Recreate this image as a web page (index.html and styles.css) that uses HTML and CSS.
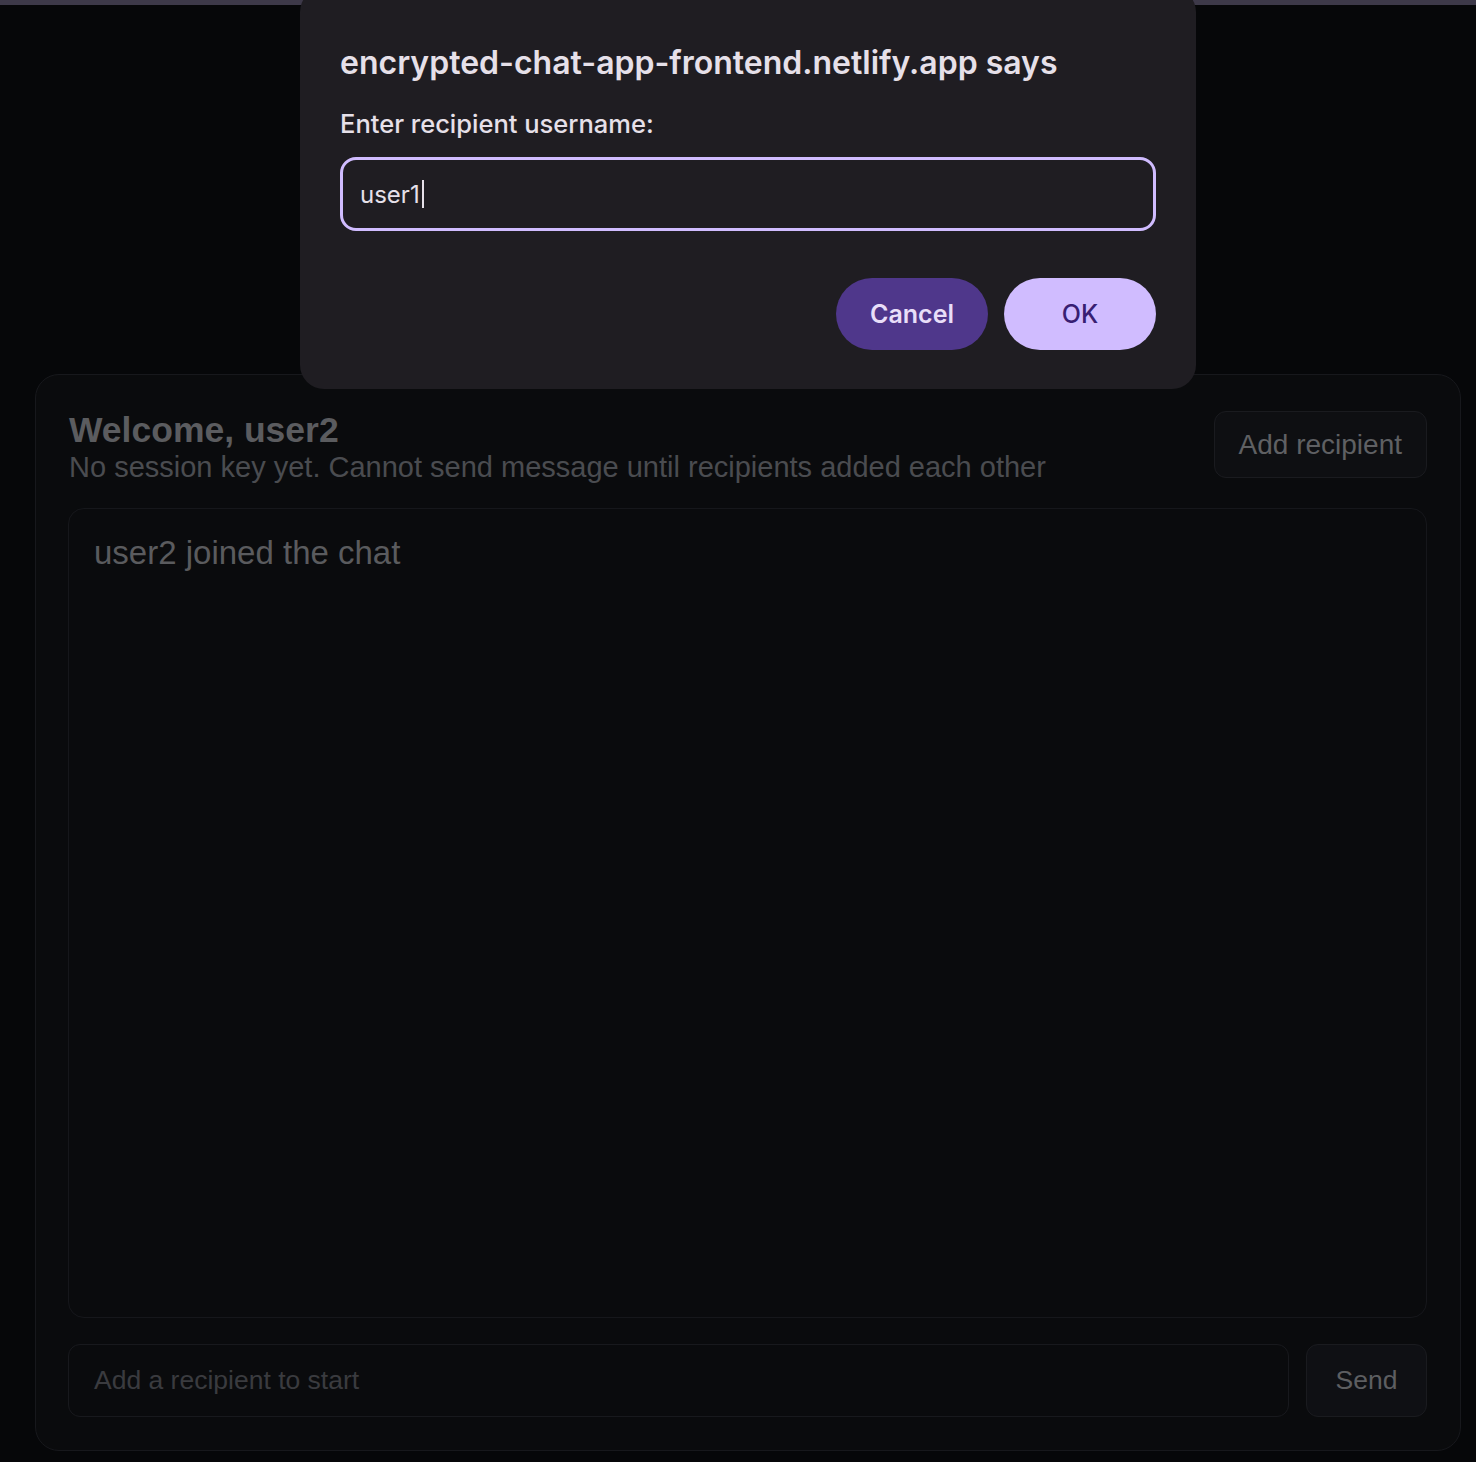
FILE: index.html
```html
<!DOCTYPE html>
<html>
<head>
<meta charset="utf-8">
<link rel="stylesheet" href="styles.css">
</head>
<body>
<div class="topbar"></div>
<main class="page">
  <section class="card">
    <header class="card-head">
      <div class="titles">
        <h2 class="welcome">Welcome, user2</h2>
        <p class="status">No session key yet. Cannot send message until recipients added each other</p>
      </div>
      <button class="btn ghost add">Add recipient</button>
    </header>
    <div class="messages">
      <p class="sys">user2 joined the chat</p>
    </div>
    <div class="composer">
      <div class="field">Add a recipient to start</div>
      <button class="btn ghost send">Send</button>
    </div>
  </section>
</main>
<div class="dialog">
  <h1 class="d-title">encrypted-chat-app-frontend.netlify.app says</h1>
  <p class="d-label">Enter recipient username:</p>
  <div class="d-input">user1<span class="caret"></span></div>
  <div class="d-actions">
    <button class="d-btn cancel">Cancel</button>
    <button class="d-btn ok">OK</button>
  </div>
</div>
</body>
</html>
```
FILE: styles.css
```css
* { box-sizing: border-box; }
html, body { margin: 0; padding: 0; }
body {
  background: #060709;
  font-family: "Liberation Sans", Arial, sans-serif;
  width: 1476px;
  height: 1462px;
  overflow: hidden;
  position: relative;
}
.topbar { height: 5px; background: #3d3949; }
.page { padding: 369px 15px 0 35px; }
.card {
  border: 1px solid #17181c;
  border-radius: 24px;
  background: #0a0b0d;
  padding: 36px 33px 33px 32px;
  height: 1077px;
  display: flex;
  flex-direction: column;
}
.card-head { display: flex; justify-content: space-between; align-items: flex-start; }
.welcome { margin: 0; font-size: 35.5px; line-height: 38px; font-weight: 700; color: #5b5c5f; padding-left: 1px; }
.status { margin: 0; font-size: 29px; line-height: 36px; color: #4a4c50; padding-left: 1px; }
.btn {
  font-family: "Liberation Sans", Arial, sans-serif;
  background: #0e0f12;
  border: 1px solid #1a1b1f;
  border-radius: 12px;
  color: #5f6063;
  font-size: 26.5px;
  height: 67px;
  padding: 0 24px;
}
.add { font-size: 28px; }
.messages {
  margin-top: 23px;
  height: 810px;
  border: 1px solid #16171b;
  border-radius: 16px;
  padding: 26px 25px;
}
.sys { margin: 0; font-size: 33px; line-height: 36px; color: #5a5b5e; }
.composer { margin-top: 26px; display: flex; gap: 17px; }
.field {
  flex: 1;
  height: 73px;
  border: 1px solid #18191d;
  border-radius: 12px;
  padding: 0 25px;
  display: flex;
  align-items: center;
  font-size: 26.5px;
  color: #3a3b3f;
}
.send { width: 121px; height: 73px; padding: 0; background: #0f1014; color: #5d5e61; }

.dialog {
  position: absolute;
  left: 300px;
  top: -12px;
  width: 896px;
  height: 401px;
  background: #1f1d22;
  border-radius: 24px;
  padding: 55px 40px 0 40px;
  font-family: Inter, "Noto Sans", sans-serif;
}
.d-title { margin: 0; font-size: 32px; line-height: 40px; font-weight: 600; color: #e6e0e9; }
.d-label { margin: 26px 0 0; font-size: 25.5px; line-height: 30px; font-weight: 500; color: #e6e0e9; }
.d-input {
  margin-top: 18px;
  height: 74px;
  border: 3px solid #d0bcff;
  border-radius: 16px;
  padding: 0 17px;
  display: flex;
  align-items: center;
  font-size: 24px;
  color: #e6e0e9;
}
.caret { display: inline-block; width: 2px; height: 28px; background: #e6e0e9; margin-left: 2px; }
.d-actions { margin-top: 47px; display: flex; justify-content: flex-end; gap: 16px; }
.d-btn {
  width: 152px;
  height: 72px;
  border: none;
  border-radius: 36px;
  font-family: Inter, "Noto Sans", sans-serif;
  font-size: 25px;
  font-weight: 600;
}
.cancel { background: #4f378b; color: #e8def8; }
.ok { background: #d0bcff; color: #381e72; font-weight: 500; }
```
